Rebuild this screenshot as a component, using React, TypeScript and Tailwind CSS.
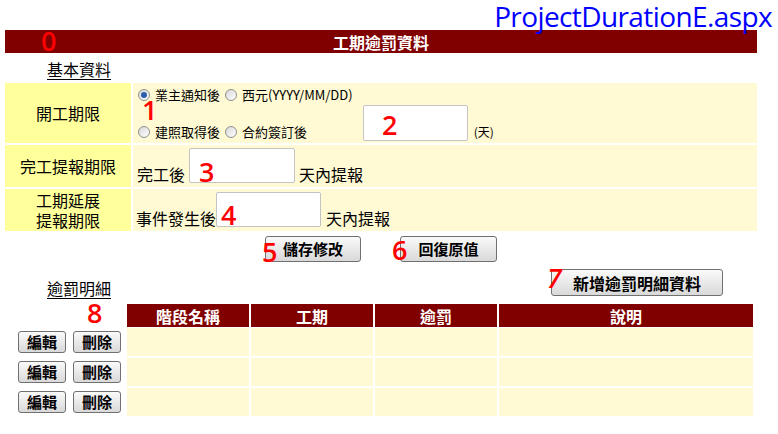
const cjk = "font-['Noto_Sans_CJK_TC','Noto_Sans',sans-serif]";

const btn =
  "flex items-center justify-center rounded-[3px] border border-[#707070] bg-gradient-to-b from-[#fafafa] to-[#d9d9d9] text-black";

function Radio({ checked }: { checked?: boolean }) {
  return (
    <span className="flex size-[12px] items-center justify-center rounded-full border border-[#8f8f8f] bg-gradient-to-br from-[#d8d8d8] to-white">
      {checked ? <span className="size-[6px] rounded-full bg-[#2b5da8]" /> : null}
    </span>
  );
}

function Mark({ n, className }: { n: string; className: string }) {
  return (
    <span
      className={`absolute font-['Open_Sans',sans-serif] text-[27px] font-semibold leading-none text-[#ff0000] ${className}`}
    >
      {n}
    </span>
  );
}

const columns = [
  { title: "階段名稱", width: "w-[122px]" },
  { title: "工期", width: "w-[122px]" },
  { title: "逾罰", width: "w-[122px]" },
  { title: "說明", width: "w-[254px]" },
];

export default function App() {
  return (
    <div className={`relative h-[434px] w-[778px] overflow-hidden bg-white pt-[30px] text-black ${cjk}`}>
      <div className="absolute right-[6px] top-[2px] font-['Open_Sans',sans-serif] text-[28px] leading-none tracking-[-0.6px] text-[#0000ff]">
        ProjectDurationE.aspx
      </div>

      <div className="ml-[5px] flex h-[23px] w-[752px] items-center justify-center bg-[#800000] text-[16px] font-bold text-white">
        工期逾罰資料
      </div>

      <div className="ml-[47px] mt-[7px] text-[16px] leading-[18px] underline underline-offset-[3px]">
        基本資料
      </div>

      <div className="ml-[5px] mt-[5px] grid w-[752px] grid-cols-[126px_624px] gap-[2px] text-[16px]">
        <div className="flex h-[60px] items-center justify-center bg-[#ffff9c]">開工期限</div>
        <div className="flex h-[60px] bg-[#fffad3] pl-[5px]">
          <div className="flex flex-col justify-between pb-[4px] pt-[5px] text-[13px] leading-[14px]">
            <div className="flex items-center gap-[5px]">
              <Radio checked />
              <span>業主通知後</span>
              <Radio />
              <span>西元(YYYY/MM/DD)</span>
            </div>
            <div className="flex items-center gap-[5px]">
              <Radio />
              <span>建照取得後</span>
              <Radio />
              <span>合約簽訂後</span>
            </div>
          </div>
          <div className="mb-[2px] ml-[10px] h-[36px] w-[105px] self-end rounded-[2px] border border-[#c4c4c4] bg-white" />
          <span className="mb-[4px] ml-[6px] self-end text-[12px] leading-[14px]">(天)</span>
        </div>

        <div className="flex h-[42px] items-center justify-center bg-[#ffff9c]">完工提報期限</div>
        <div className="flex h-[42px] items-end bg-[#fffad3] pb-[3px] pl-[4px] leading-[20px]">
          <span>完工後</span>
          <div className="mb-[1px] ml-[4px] h-[35px] w-[106px] rounded-[2px] border border-[#c4c4c4] bg-white" />
          <span className="ml-[4px]">天內提報</span>
        </div>

        <div className="flex h-[42px] flex-col items-center justify-center bg-[#ffff9c] leading-[20px]">
          <span>工期延展</span>
          <span>提報期限</span>
        </div>
        <div className="flex h-[42px] items-end bg-[#fffad3] pb-[3px] pl-[3px] leading-[20px]">
          <span>事件發生後</span>
          <div className="mb-[1px] h-[35px] w-[105px] rounded-[2px] border border-[#c4c4c4] bg-white" />
          <span className="ml-[5px]">天內提報</span>
        </div>
      </div>

      <div className="ml-[5px] mt-[5px] flex w-[752px] justify-center gap-[39px]">
        <button className={`${btn} h-[26px] w-[96px] text-[15px] font-semibold`}>儲存修改</button>
        <button className={`${btn} h-[26px] w-[97px] text-[15px] font-semibold`}>回復原值</button>
      </div>

      <div className="mt-[7px] flex h-[28px] items-end">
        <span className="ml-[47px] text-[16px] leading-[18px] underline underline-offset-[3px]">逾罰明細</span>
        <button className={`${btn} mb-[1px] ml-auto mr-[55px] h-[27px] w-[172px] text-[16px] font-semibold`}>
          新增逾罰明細資料
        </button>
      </div>

      <div className="mt-[7px] flex">
        <div className="w-[127px]" />
        <div className="flex gap-[2px]">
          {columns.map((col) => (
            <div
              key={col.title}
              className={`${col.width} flex h-[23px] items-center justify-center bg-[#800000] text-[16px] font-bold text-white`}
            >
              {col.title}
            </div>
          ))}
        </div>
      </div>

      <div className="mt-[1px] flex flex-col gap-[2px]">
        {[0, 1, 2].map((row) => (
          <div key={row} className="flex h-[28px]">
            <div className="flex w-[127px] items-center gap-[7px] pl-[18px]">
              <button className={`${btn} h-[22px] w-[48px] text-[15px] font-semibold`}>編輯</button>
              <button className={`${btn} h-[22px] w-[48px] text-[15px] font-semibold`}>刪除</button>
            </div>
            <div className="flex gap-[2px]">
              {columns.map((col) => (
                <div key={col.title} className={`${col.width} bg-[#fffad3]`} />
              ))}
            </div>
          </div>
        ))}
      </div>

      <Mark n="0" className="left-[41px] top-[27px]" />
      <Mark n="1" className="left-[142px] top-[96px]" />
      <Mark n="2" className="left-[382px] top-[111px]" />
      <Mark n="3" className="left-[199px] top-[158px]" />
      <Mark n="4" className="left-[221px] top-[201px]" />
      <Mark n="5" className="left-[262px] top-[238px]" />
      <Mark n="6" className="left-[392px] top-[236px]" />
      <Mark n="7" className="left-[547px] top-[264px] italic" />
      <Mark n="8" className="left-[87px] top-[299px]" />
    </div>
  );
}
